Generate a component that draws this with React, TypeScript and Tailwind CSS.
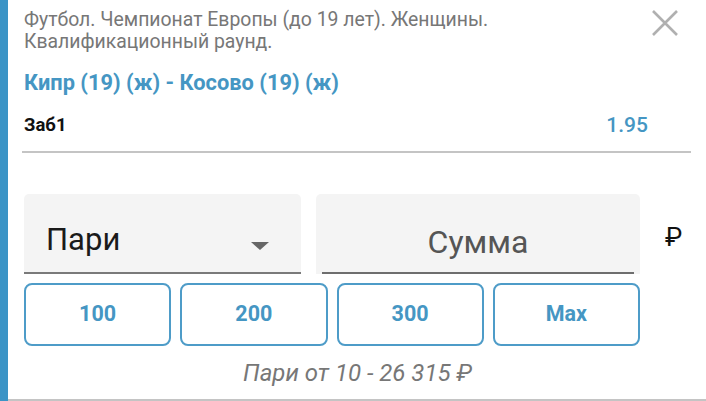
import React from "react";

const amounts = ["100", "200", "300", "Max"];

export default function App() {
  return (
    <div
      className="flex h-[401px] w-[706px] overflow-hidden bg-white"
      style={{ fontFamily: "Roboto, 'Noto Sans', sans-serif" }}
    >
      <div className="w-[8px] shrink-0 bg-[#3b94c6]" />
      <div className="relative flex flex-1 flex-col border-b-2 border-[#c4c4c4] pl-[16px] pr-[15px]">
        {/* close */}
        <button className="absolute right-[28px] top-[10px] h-[26px] w-[26px]">
          <svg viewBox="0 0 26 26" className="h-[26px] w-[26px]">
            <path d="M1 1L25 25M25 1L1 25" stroke="#b0b0b0" strokeWidth="2.6" />
          </svg>
        </button>

        <div className="pt-[9px] pr-[70px] text-[19.4px] leading-[22px] text-[#777777]">
          Футбол. Чемпионат Европы (до 19 лет). Женщины.
          <br />
          Квалификационный раунд.
        </div>

        <div className="mt-[18px] text-[21.8px] font-bold leading-[24px] text-[#4596c3]">
          Кипр (19) (ж) - Косово (19) (ж)
        </div>

        <div className="mt-[18px] flex items-center justify-between pr-[43px] leading-[24px]">
          <span className="text-[18.5px] font-bold text-[#111]">Заб1</span>
          <span className="text-[21px] font-medium text-[#4596c3]">1.95</span>
        </div>

        <div className="-ml-[2px] mt-[14px] h-[2px] bg-[#c4c4c4]" />

        <div className="mt-[41px] flex gap-[15px]">
          <div className="relative flex h-[80px] w-[277px] shrink-0 items-center rounded-t-[5px] border-b-2 border-[#7a7a7a] bg-[#f4f4f4] pl-[22px] pt-[14px]">
            <span className="text-[31px] text-[#1a1a1a]">Пари</span>
            <svg
              viewBox="0 0 18 8"
              className="absolute left-[227px] top-[48px] h-[8px] w-[18px]"
            >
              <path d="M0 0H18L9 8Z" fill="#666" />
            </svg>
          </div>
          <div className="flex h-[80px] w-[324px] shrink-0 flex-col rounded-t-[5px] bg-[#f4f4f4] px-[6px]">
            <div className="flex flex-1 items-center justify-center pt-[18px] text-[32px] text-[#555]">
              Сумма
            </div>
            <div className="h-[2px] bg-[#6e6e6e]" />
          </div>
          <div className="pl-[10px] pt-[28px] text-[26px] leading-[30px] text-[#111]">₽</div>
        </div>

        <div className="mt-[9px] flex w-[616px] gap-[9px]">
          {amounts.map((a) => (
            <button
              key={a}
              className="h-[63px] flex-1 rounded-[8px] border-2 border-[#4e9cc8] text-[21.5px] font-bold text-[#4596c3]"
            >
              {a}
            </button>
          ))}
        </div>

        <div className="mt-[13px] text-center text-[24px] italic leading-[28px] text-[#777]">
          Пари от 10 - 26 315 ₽
        </div>
      </div>
    </div>
  );
}
